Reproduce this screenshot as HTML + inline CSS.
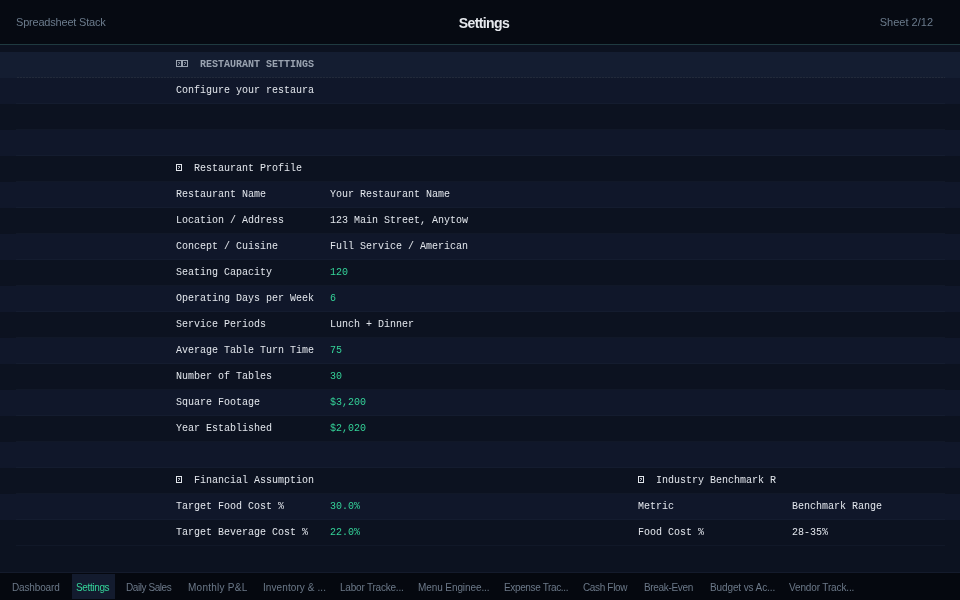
<!DOCTYPE html>
<html><head><meta charset="utf-8">
<style>
*{margin:0;padding:0;box-sizing:border-box}
#hdr,#grid,#tabs{will-change:transform}
html,body{width:960px;height:600px;overflow:hidden;background:#0c1220}
body{position:relative;font-family:"Liberation Sans",sans-serif}
#hdr{position:absolute;left:0;top:0;width:960px;height:45px;background:#060a12;border-bottom:1px solid #1f3a40}
#hdr .l{position:absolute;left:16px;top:16px;font-size:11px;letter-spacing:-0.2px;color:#6b7b8c}
#hdr .ctr{position:absolute;left:4px;width:960px;top:15px;text-align:center;font-size:14px;letter-spacing:-0.6px;font-weight:bold;color:#e6e9ee}
#hdr .r{position:absolute;right:27px;top:16px;font-size:11px;color:#6b7b8c}
#grid{position:absolute;left:0;top:52px;width:960px}
.row{height:26px;position:relative;background:#10172a}
.row.d{background:#0c1220}
.row.h{background:#141d31}
.row .in{position:absolute;left:16px;right:15px;top:0;bottom:0;border-bottom:1px solid rgba(30,41,59,.3)}
.row.h .in{border-bottom:0}
.row.h .in::after{content:"";position:absolute;left:0;right:0;bottom:0;height:1px;background:repeating-linear-gradient(to right,transparent 0 1px,#222a3a 1px 3px)}
.c{position:absolute;top:0;height:25px;line-height:25px;font-family:"Liberation Mono",monospace;font-size:10px;color:#e2e6ec;white-space:nowrap;overflow:hidden}
.cb{left:160px;width:138px}
.cc{left:314px;width:138px}
.ce{left:622px;width:138px}
.cf{left:776px;width:138px}
.g{color:#34d399}
.ttl{font-weight:bold;color:#9aa3b0}
.ico{display:inline-block;width:6px;height:7px;vertical-align:middle;margin-top:-2px}
#tabs{position:absolute;left:0;top:572px;width:960px;height:28px;background:#05080f;border-top:1px solid #141b2c}
.tab{position:absolute;top:2px;height:26px;line-height:26px;font-size:10px;color:#6b7888;white-space:nowrap}
.tab.act{color:#34d399}
.actbg{position:absolute;left:72px;top:1px;width:43px;height:25px;background:#131b2e}
</style></head><body>
<div id="hdr"><div class="l">Spreadsheet Stack</div><div class="ctr">Settings</div><div class="r">Sheet 2/12</div></div>
<div id="grid">
<div class="row h"><div class="in"><div class="c cb ttl"><svg class="ico" width="6" height="7" viewBox="0 0 6 7" shape-rendering="crispEdges"><path d="M0 0h6v1h-6zM0 6h6v1h-6zM0 1h1v5h-1zM5 1h1v5h-1z" fill="currentColor"/><path d="M2 2h2v1h-2zM3 3h1v1h-1zM2 4h1v1h-1z" fill="currentColor" opacity=".75"/></svg><svg class="ico" width="6" height="7" viewBox="0 0 6 7" shape-rendering="crispEdges"><path d="M0 0h6v1h-6zM0 6h6v1h-6zM0 1h1v5h-1zM5 1h1v5h-1z" fill="currentColor"/><path d="M2 2h2v1h-2zM3 3h1v1h-1zM2 4h1v1h-1z" fill="currentColor" opacity=".75"/></svg>&nbsp; RESTAURANT SETTINGS &amp; CONFIGURATION</div></div></div>
<div class="row"><div class="in"><div class="c cb">Configure your restaurant settings</div></div></div>
<div class="row d"><div class="in"></div></div>
<div class="row"><div class="in"></div></div>
<div class="row d"><div class="in"><div class="c cb"><svg class="ico" width="6" height="7" viewBox="0 0 6 7" shape-rendering="crispEdges"><path d="M0 0h6v1h-6zM0 6h6v1h-6zM0 1h1v5h-1zM5 1h1v5h-1z" fill="currentColor"/><path d="M2 2h2v1h-2zM3 3h1v1h-1zM2 4h1v1h-1z" fill="currentColor" opacity=".75"/></svg>&nbsp; Restaurant Profile</div></div></div>
<div class="row"><div class="in"><div class="c cb">Restaurant Name</div><div class="c cc">Your Restaurant Name</div></div></div>
<div class="row d"><div class="in"><div class="c cb">Location / Address</div><div class="c cc">123 Main Street, Anytown, USA</div></div></div>
<div class="row"><div class="in"><div class="c cb">Concept / Cuisine</div><div class="c cc">Full Service / American</div></div></div>
<div class="row d"><div class="in"><div class="c cb">Seating Capacity</div><div class="c cc g">120</div></div></div>
<div class="row"><div class="in"><div class="c cb">Operating Days per Week</div><div class="c cc g">6</div></div></div>
<div class="row d"><div class="in"><div class="c cb">Service Periods</div><div class="c cc">Lunch + Dinner</div></div></div>
<div class="row"><div class="in"><div class="c cb">Average Table Turn Time</div><div class="c cc g">75</div></div></div>
<div class="row d"><div class="in"><div class="c cb">Number of Tables</div><div class="c cc g">30</div></div></div>
<div class="row"><div class="in"><div class="c cb">Square Footage</div><div class="c cc g">$3,200</div></div></div>
<div class="row d"><div class="in"><div class="c cb">Year Established</div><div class="c cc g">$2,020</div></div></div>
<div class="row"><div class="in"></div></div>
<div class="row d"><div class="in"><div class="c cb"><svg class="ico" width="6" height="7" viewBox="0 0 6 7" shape-rendering="crispEdges"><path d="M0 0h6v1h-6zM0 6h6v1h-6zM0 1h1v5h-1zM5 1h1v5h-1z" fill="currentColor"/><path d="M2 2h2v1h-2zM3 3h1v1h-1zM2 4h1v1h-1z" fill="currentColor" opacity=".75"/></svg>&nbsp; Financial Assumptions</div><div class="c ce"><svg class="ico" width="6" height="7" viewBox="0 0 6 7" shape-rendering="crispEdges"><path d="M0 0h6v1h-6zM0 6h6v1h-6zM0 1h1v5h-1zM5 1h1v5h-1z" fill="currentColor"/><path d="M2 2h2v1h-2zM3 3h1v1h-1zM2 4h1v1h-1z" fill="currentColor" opacity=".75"/></svg>&nbsp; Industry Benchmark Ranges</div></div></div>
<div class="row"><div class="in"><div class="c cb">Target Food Cost %</div><div class="c cc g">30.0%</div><div class="c ce">Metric</div><div class="c cf">Benchmark Range</div></div></div>
<div class="row d"><div class="in"><div class="c cb">Target Beverage Cost %</div><div class="c cc g">22.0%</div><div class="c ce">Food Cost %</div><div class="c cf">28-35%</div></div></div>
</div>
<div id="tabs">
<div class="actbg"></div>
<div class="tab" style="left:12px;letter-spacing:-0.15px">Dashboard</div>
<div class="tab act" style="left:76px;letter-spacing:-0.36px">Settings</div>
<div class="tab" style="left:126px;letter-spacing:-0.43px">Daily Sales</div>
<div class="tab" style="left:188px;letter-spacing:0.25px">Monthly P&amp;L</div>
<div class="tab" style="left:263px;letter-spacing:0.09px">Inventory &amp; ...</div>
<div class="tab" style="left:340px;letter-spacing:-0.21px">Labor Tracke...</div>
<div class="tab" style="left:418px;letter-spacing:-0.09px">Menu Enginee...</div>
<div class="tab" style="left:504px;letter-spacing:-0.36px">Expense Trac...</div>
<div class="tab" style="left:583px;letter-spacing:-0.35px">Cash Flow</div>
<div class="tab" style="left:644px;letter-spacing:-0.33px">Break-Even</div>
<div class="tab" style="left:710px;letter-spacing:-0.11px">Budget vs Ac...</div>
<div class="tab" style="left:789px;letter-spacing:-0.14px">Vendor Track...</div>
</div>
</body></html>
